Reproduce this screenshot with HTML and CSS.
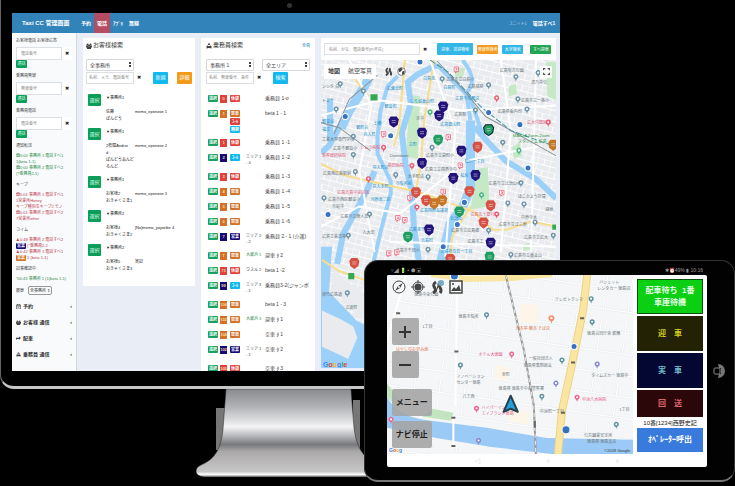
FILE: index.html
```html
<!DOCTYPE html>
<html lang="ja">
<head>
<meta charset="utf-8">
<title>Taxi CC 管理画面</title>
<link rel="stylesheet" href="styles.css">
</head>
<body>
<svg class="defs" aria-hidden="true">
  <symbol id="poi" viewBox="0 0 8 10"><path d="M4 10 3 7A3.4 3.4 0 1 1 5 7Z"/><circle cx="4" cy="3.7" r="1.4" fill="#fff"/></symbol>
  <symbol id="car" viewBox="0 0 12 12"><path d="M3 1 9 1 11 4 10 9 6 12 2 9 1 4Z"/><path d="M4 5H8M4 7H8" stroke="#fff" stroke-width=".8" opacity=".6"/></symbol>
  <symbol id="stop" viewBox="0 0 8 10"><path d="M1 1H7V7H4L3 9V7H1Z" fill="#fff" stroke="#ee5872"/><path d="M3 3H5V5H3" fill="none" stroke="#ee5872"/></symbol>
  <symbol id="taxi" viewBox="0 0 12 12"><path d="M4 1H8V3L10 6 11 7V11H9V10H3V11H1V7L2 6 4 3ZM4 4 3 6H9L8 4Z" fill-rule="evenodd"/></symbol>
  <symbol id="people" viewBox="0 0 12 12"><circle cx="3" cy="3" r="2"/><circle cx="9" cy="3" r="2"/><circle cx="6" cy="5" r="2"/><path d="M0 5H4L5 7H7L8 5H12V9H10V12H2V9H0Z"/></symbol>
  <symbol id="road" viewBox="0 0 14 14"><path d="M3 13C10 9-1 6 6 2M10 13C14 8 6 7 10 2" fill="none" stroke="currentColor" stroke-width="3"/><path d="M6 12 9 3" stroke="currentColor"/></symbol>
</svg>
<main class="scene">
  <section class="monitor">
    <i class="camera"></i>
    <div class="screen">
      <header class="topbar">
        <strong class="brand">Taxi CC 管理画面</strong>
        <nav><a href="#">予約</a><a href="#" class="active">電話</a><a href="#">ｱﾌﾟﾘ</a><a href="#">無線</a></nav>
        <span class="unit">ユニット1</span><span class="phone">電話すべ1</span>
      </header>
      <div class="workspace">
        <aside class="sidebar">
          <form class="dial"><label for="d1">お客様電話 お客様応答</label><div class="group"><input id="d1" placeholder="電話番号"><button type="button" class="clear">✖</button></div><button type="button" class="send">通話</button></form>
          <form class="dial"><label for="d2">乗務員無線</label><div class="group"><input id="d2" placeholder="無線番号"><button type="button" class="clear">✖</button></div><button type="button" class="send">通話</button></form>
          <form class="dial"><label for="d3">乗務員電話</label><div class="group"><input id="d3" placeholder="電話番号"><button type="button" class="clear">✖</button></div><button type="button" class="send">通話</button></form>
          <h3>通知転送</h3>
          <p class="log green">☎0:00 事務所 1 電話すべ1<br>1(beta 1-1)<br>☎0:00 事務所 2 電話すべ2<br>(?乗務員2-1)</p>
          <h3>キープ</h3>
          <p class="log red">☎0:01 事務所 1 電話すべ1<br>1営業所Honey<br>キープ種別をキープ2 モノ<br>☎0:01 事務所 2 電話すべ2<br>7営業所other</p>
          <h3>コイム</h3>
          <p class="log red">♟0:48 事務所 2 電話すべ2<br><b class="tag navy">営業</b> (*乗務員2-2<br>♟0:42 事務所 1 電話すべ1<br><b class="tag orange">営業</b> 1 (beta 1-1)</p>
          <h3>記事確認中</h3>
          <p class="log green">*00:43 事務所 1 (1(beta 1-1)</p>
          <div class="history"><label for="hist">履歴</label><select id="hist"><option>全事務所 ⇕</option></select></div>
          <nav class="menu">
            <a href="#"><svg viewBox="0 0 12 12"><path d="M1 2H11V12H1ZM1 5H11M4 0V4M8 0V4M4 8H8" fill="none" stroke="currentColor" stroke-width="1.5"/></svg>予約<span>‹</span></a>
            <a href="#"><svg viewBox="0 0 12 12"><use href="#people"/></svg>お客様 通信<span>‹</span></a>
            <a href="#"><svg viewBox="0 0 12 12"><path d="M0 9V4H7V1L12 5 7 9V7H3Z"/></svg>配車<span>‹</span></a>
            <a href="#"><svg viewBox="0 0 12 12"><use href="#taxi"/></svg>乗務員 通信<span>‹</span></a>
          </nav>
        </aside>

        <section class="card customers">
          <h2><svg viewBox="0 0 12 12"><use href="#people"/></svg>お客様検索</h2>
          <div class="filters"><select aria-label="事務所"><option>全事務所</option></select></div>
          <div class="filters"><div class="group"><input aria-label="お客様" placeholder="名前、メモ、電話番号"><button type="button" class="clear">✖</button></div><button class="btn cyan">新規</button><button class="btn amber">詳細</button></div>
          <ul class="people">
            <li><button class="pick">選択</button><div><h4>▼事務所1</h4><div class="who"><p>佐藤<br>ぽんどう</p><p>memo_eponzoe 1</p></div></div></li>
            <li><button class="pick">選択</button><div><h4>▼事務所1</h4><div class="who"><p>2夜間Androi<br>d<br>ぽんどうあんど<br>るんど</p><p>memo_eponzoe 2</p></div></div></li>
            <li><button class="pick">選択</button><div><h4>▼事務所1</h4><div class="who"><p>お客様2<br>おきゃくさま1</p><p>memo_eponzoe 3</p></div></div></li>
            <li><button class="pick">選択</button><div><h4>▼事務所2</h4><div class="who"><p>お客様4<br>おきゃくさま2</p><p>[No]memo_yoyoribe 4</p></div></div></li>
            <li><button class="pick">選択</button><div><h4>▼事務所2</h4><div class="who"><p>お客様5<br>おきゃくさま3</p><p>実記</p></div></div></li>
          </ul>
        </section>

        <section class="card crew">
          <h2><svg viewBox="0 0 12 12"><use href="#taxi"/></svg>乗務員検索<a href="#">全員</a></h2>
          <div class="filters pair"><select aria-label="事務所"><option>事務所 1</option></select><select aria-label="エリア"><option>全エリア</option></select></div>
          <div class="filters"><div class="group"><input aria-label="乗務員" placeholder="名前、無線番号、条件"><button type="button" class="clear">✖</button></div><button class="btn cyan">検索</button></div>
          <table>
            <tr><td><button class="tag green">選択</button></td><td><b class="num red">0</b></td><td><b class="tag red">休憩</b></td><td></td><td>乗務員 1-σ</td></tr>
            <tr class="tall"><td><button class="tag green">選択</button></td><td><b class="num orange">1</b></td><td><b class="tag orange">空車</b><b class="tag red">ｺｰﾙ</b><b class="tag cyan">無線</b></td><td></td><td>beta 1 - 1</td></tr>
            <tr><td><button class="tag green">選択</button></td><td><b class="num red">1</b></td><td><b class="tag red">休憩</b></td><td></td><td>乗務員 1 -1</td></tr>
            <tr class="two"><td><button class="tag green">選択</button></td><td><b class="num navy">2</b></td><td><b class="tag cyan">ｺｰﾙ</b></td><td>エリア 1<br>- 4</td><td>乗務員 1 -2</td></tr>
            <tr><td><button class="tag green">選択</button></td><td><b class="num red">3</b></td><td><b class="tag red">休憩</b></td><td></td><td>乗務員 1 -3</td></tr>
            <tr><td><button class="tag green">選択</button></td><td><b class="num orange">4</b></td><td><b class="tag orange">空車</b></td><td></td><td>乗務員 1 -4</td></tr>
            <tr><td><button class="tag green">選択</button></td><td><b class="num orange">5</b></td><td><b class="tag orange">空車</b></td><td></td><td>乗務員 1 -5</td></tr>
            <tr><td><button class="tag green">選択</button></td><td><b class="num orange">6</b></td><td><b class="tag orange">空車</b></td><td></td><td>乗務員 1 -6</td></tr>
            <tr class="two"><td><button class="tag green">選択</button></td><td><b class="num navy">7</b></td><td><b class="tag navy">営業</b></td><td>エリア 2<br>- 2</td><td>乗務員 2 - 1 (介護)</td></tr>
            <tr><td><button class="tag green">選択</button></td><td><b class="num orange">T</b></td><td><b class="tag orange">空車</b></td><td class="place">大蔵浜 5</td><td>迎車 ﾀ 2</td></tr>
            <tr><td><button class="tag green">選択</button></td><td><b class="num red">73</b></td><td><b class="tag red">休憩</b></td><td>ウスル 2</td><td>beta 1 -2</td></tr>
            <tr class="two"><td><button class="tag green">選択</button></td><td><b class="num navy">99</b></td><td><b class="tag cyan">ｺｰﾙ</b></td><td>エリア 3<br>- 1</td><td>乗務員3-2(ジャンボ</td></tr>
            <tr><td><button class="tag green">選択</button></td><td><b class="num orange">104</b></td><td><b class="tag orange">空車</b></td><td></td><td>beta 1 - 3</td></tr>
            <tr><td><button class="tag green">選択</button></td><td><b class="num orange">102</b></td><td><b class="tag orange">空車</b></td><td class="place">大蔵浜 3</td><td>迎車 ﾀ 1</td></tr>
            <tr><td><button class="tag green">選択</button></td><td><b class="num orange">104</b></td><td><b class="tag orange">空車</b></td><td></td><td>空車 ﾀ 1</td></tr>
            <tr class="two"><td><button class="tag green">選択</button></td><td><b class="num navy">102</b></td><td><b class="tag navy">営業</b></td><td>エリア 1<br>- 1</td><td>空車 ﾀ 2</td></tr>
            <tr><td><button class="tag green">選択</button></td><td><b class="num red">105</b></td><td><b class="tag red">休憩</b></td><td></td><td>空車 ﾀ 3</td></tr>
          </table>
        </section>

        <section class="card mapcard">
          <div class="toolbar"><div class="group"><input aria-label="地図検索" placeholder="名前、かな、電話番号(P/不在)"><button type="button" class="clear">✖</button></div><button class="btn sky">迎車、送迎検索</button><button class="mini amber">無線隊検索</button><button class="mini sky">大字検索</button><button class="mini leaf">すべ迎車</button></div>
          <div class="map">
            <svg class="drawing" viewBox="322 60 233 307" preserveAspectRatio="xMinYMin slice">
              <defs>
                <pattern id="blocks" width="13" height="11" patternUnits="userSpaceOnUse" patternTransform="rotate(14)"><path d="M0 0H13M0 6H13M0 0V11M7 0V6" stroke="#fff" fill="none"/></pattern>
              </defs>
              <path class="land" d="M322 60H555V367H322Z"/>
              <path fill="url(#blocks)" d="M322 60H555V367H322Z"/>
              <path class="park" d="M410 95 420 96 418 158 406 156ZM476 168 487 166 489 205 470 208ZM511 146 519 142 521 155 513 158ZM545 62H555V100L546 96ZM522 243 528 241 529 248 522 249ZM454 68 465 68 462 78 455 76ZM508 86 515 84 516 94 508 96Z"/>
              <g class="water">
                <path d="M322 245H333L330 290 345 305 357 318 365 322V367H322V300Z"/>
                <path class="r9" d="M369 79C360 96 348 110 342 128"/><path class="r6" d="M342 123 330 145 322 152M331 98V140"/>
                <path class="r6" d="M375 170 368 188 358 207 344 232 338 262M437 65 418 74 408 82 411 103 402 132 406 165 412 190 414 225 419 260"/>
                <path class="r4" d="M398 76 388 86 381 110 378 135 378 153 391 180 391 192 381 230 374 260"/>
                <path class="r9" d="M470 120V187L462 206 450 222 440 262"/>
                <path class="r4" d="M462 60C472 72 475 84 466 92L470 120M437 65 470 98 483 137"/>
                <path class="r6" d="M474 126 488 142 505 160 535 178 555 197"/>
              </g>
              <path class="land" d="M323 308 342 317 354 324 358 335 349 356 336 350 323 344Z"/>
              <path class="land" d="M334 266 348 280 364 290V316L356 312 345 298 332 288Z"/>
              <g class="highway"><path d="M322 163 345 174 370 180 420 191 450 202 473 210 492 228 506 228 530 220 555 225"/><path d="M323 258 340 269 365 278M405 60 399 130 394 145M434 60 424 120 421 162 415 195M355 78 369 96M470 205 452 235 449 262"/></g>
              <path class="street" d="M322 225 360 205 400 212 465 160 540 145M350 60 372 105 360 170 375 250M500 60 510 130 500 250M430 60 455 130 445 255M322 115 380 100 460 110 555 105M390 240 555 245M535 60 530 250"/>
              <g class="rail"><path d="M437 61 465 92 485 116 514 132 555 155M378 75 350 99 335 133M322 122 340 127 371 150"/><path class="jr" d="M430 60 448 72 480 106 510 130 555 146"/></g>
              <g id="city"></g>
              <path fill="#35a853" d="M371 94H378V100H371ZM551 223H555V228H551ZM349 271H355V277H349Z"/>
              <text class="google" x="324" y="364"><tspan fill="#4285f4">G</tspan><tspan fill="#ea4335">o</tspan><tspan fill="#fbbc05">o</tspan><tspan fill="#4285f4">g</tspan><tspan fill="#34a853">l</tspan><tspan fill="#ea4335">e</tspan></text>
            </svg>
            <div class="mapctl"><div class="types"><button><b>地図</b></button><button>航空写真</button></div><svg viewBox="0 0 14 14"><use href="#road"/></svg><svg viewBox="0 0 14 14"><circle cx="7" cy="7" r="6" fill="#fff" stroke="#444"/><path d="M2 4 6 1 9 3 6 7 3 8ZM8 7 12 6 11 11 8 12Z"/></svg><button class="full" aria-label="全画面"><svg viewBox="0 0 12 12"><path d="M1 4V1H4M8 1H11V4M11 8V11H8M4 11H1V8" fill="none" stroke="#555" stroke-width="2"/></svg></button></div>
          </div>
        </section>
      </div>
    </div>
  </section>
  <svg class="stand" viewBox="196 389 180 90" aria-hidden="true">
    <defs><linearGradient id="metal" x1="0" y1="0" x2="0" y2="1"><stop offset="0" stop-color="#898b8e"/><stop offset=".2" stop-color="#b0b2b5"/><stop offset=".43" stop-color="#f3f3f5"/><stop offset=".54" stop-color="#b2b3b6"/><stop offset=".63" stop-color="#77797d"/><stop offset=".71" stop-color="#aaa8a8"/><stop offset=".94" stop-color="#c8c7c7"/><stop offset=".97" stop-color="#fff"/><stop offset="1" stop-color="#777"/></linearGradient></defs>
    <path fill="#777" d="M216 408H225V450H216ZM353 400H360V450H353Z"/>
    <path fill="url(#metal)" stroke="#222" stroke-width=".5" d="M226 389H351L354 428C356 443 360 453 370 460V477H204C194 476 194 468 201 465C215 459 221 449 223 429Z"/>
  </svg>

  <section class="tablet">
    <div class="status"><span>▿◢ 🔋 ▪ ⬢ ▣</span><span>✱⏰49% ▮ 10:16</span></div>
    <div class="pad">
      <div class="navmap">
        <svg class="drawing" viewBox="386 275 248 178" preserveAspectRatio="xMinYMin slice">
          <defs><pattern id="lanes" width="25" height="21" patternUnits="userSpaceOnUse" patternTransform="rotate(8)"><path d="M0 0H25M0 12H25M0 0V21M13 0V12" stroke="#e5e9ed" stroke-width="2" fill="none"/><path d="M0 0H25M0 12H25M0 0V21M13 0V12" stroke="#fff" fill="none"/></pattern></defs>
          <path fill="#f5f6f7" d="M386 275H634V453H386Z"/><path fill="url(#lanes)" d="M386 275H634V453H386Z"/>
          <path fill="#fdf5e7" d="M519 303 536 305 535 324 517 322ZM494 365 508 367 506 380 493 378ZM508 409 528 411 526 424 507 421Z"/>
          <path fill="#c2e5bf" d="M386 383 402 403 398 409 386 396ZM431 408 452 412 450 420 421 416Z"/>
          <path fill="#9bcaf6" d="M386 396C395 413 410 417 430 420L485 427 545 437 634 439V453H550L490 446 435 437 386 427Z"/>
          <path class="avenue-edge" d="M585 275 581 310 571 359 560 410 556 453"/><path class="avenue" d="M585 275 581 310 571 359 560 410 556 453"/>
          <path class="avenue" d="M430 274 465 279 510 278 550 274"/>
          <path class="track-bg" d="M504 275 522 349 532 405 534 453"/><path class="track" d="M504 275 522 349 532 405 534 453"/>
          <path stroke="#fff" stroke-width="2" fill="none" d="M452 416V445M405 275 386 340M456 275 454 405"/>
          <path stroke="#65645b" stroke-width="2" d="M395 313H399M453 351H457M450 417H454M450 445H454M578 318H582M569 362H573M559 412H563M533 420V427"/>
          <g id="town"></g>
          <path fill="#23a0dc" stroke="#29414f" stroke-width="2" stroke-linejoin="round" d="M509 395 516 411 509 408 502 411Z"/>
          <text class="google small" x="388" y="451"><tspan fill="#4285f4">G</tspan><tspan fill="#ea4335">o</tspan><tspan fill="#fbbc05">o</tspan><tspan fill="#4285f4">g</tspan></text>
        </svg>
        <div class="overlay">
          <div class="tools">
            <svg viewBox="0 0 14 14"><circle cx="7" cy="7" r="6" fill="none" stroke="#444"/><path d="M11 3 8 8 3 11 6 6Z"/><circle cx="7" cy="7" r="1" fill="#fff"/></svg>
            <svg viewBox="0 0 14 14"><circle cx="7" cy="7" r="5" fill="none" stroke="#444"/><circle cx="7" cy="7" r="3.6"/><path d="M7 0V3M7 11V14M0 7H3M11 7H14" stroke="#444"/></svg>
            <svg viewBox="0 0 14 14"><use href="#road"/><circle cx="11" cy="3" r="3" fill="#78a9c4"/></svg>
            <svg viewBox="0 0 14 14"><path d="M1 1H13V13H1Z" fill="none" stroke="#444" stroke-width="1.5"/><path d="M2 11 5 7 7 9 10 5 12 11Z"/><circle cx="4" cy="4" r="1"/></svg>
          </div>
          <button class="zoom" aria-label="拡大"><svg viewBox="0 0 12 12"><path d="M0 6H12M6 0V12" stroke="#333" stroke-width="2"/></svg></button><button class="zoom second" aria-label="縮小"><svg viewBox="0 0 12 12"><path d="M0 6H12" stroke="#333" stroke-width="2"/></svg></button>
          <button class="wide">メニュー</button><button class="wide">ナビ停止</button>
        </div>
      </div>
      <div class="state">
        <button class="wait">配車待ち&nbsp; 1番<br>車庫待機</button>
        <button class="pickup">迎　車</button>
        <button class="hired">実　車</button>
        <button class="return">回　送</button>
        <p>10番[1234]西野史記</p>
        <button class="call">ｵﾍﾟﾚｰﾀｰ呼出</button>
      </div>
      <div class="android"><span>◁</span><span>○</span><span>○</span></div>
    </div>
    <svg class="home" viewBox="0 0 14 16"><path d="M5 1A7 7 0 0 1 5 15L6 11H8V5H6Z" fill="#777"/><rect x="1" y="5" width="6" height="6" rx="1" fill="#000" stroke="#888"/></svg>
  </section>
</main>
<script src="map.js"></script>
</body>
</html>
```
FILE: map.js
```js
const text = (cls, rows) => `<g class="${cls}">` + rows.map(([x, y, t]) => `<text x="${x}" y="${y}">${t}</text>`).join('') + '</g>';
const pins = (id, fill, w, h, rows) => `<g fill="${fill}">` + rows.map(([x, y]) => `<use href="#${id}" x="${x}" y="${y}" width="${w}" height="${h}"/>`).join('') + '</g>';
const shields = rows => '<g class="shield">' + rows.map(([x, y, r = 3]) => `<circle cx="${x}" cy="${y}" r="${r}"/>`).join('') + '</g>';

document.getElementById('city').innerHTML =
  text('name', [[323,88,'ンシタ  白'],[323,140,'工業大学専門学校'],[334,149,'広島市観音小'],[324,174,'広島西広島駅前'],[329,200,'広島市西区観音小'],[333,207,'市庭中'],[341,216,'広島市立商人高'],[323,236,'広島工業高等'],[323,294,'南竹広島道'],[346,307,'江波町'],[499,72,'広島有方公園'],[446,81,'広島市立白島小'],[467,88,'広島城跡'],[530,84,'済乃井公'],[520,102,'広島市立一条小'],[497,112,'広島県看内司'],[454,115,'広島駅'],[416,119,'本中'],[390,156,'Downtown'],[426,156,'広島市立袋町小'],[425,170,'広島工立国泰寺中'],[408,177,'大手町店'],[488,184,'広島市立比治山小'],[517,197,'ほこかよう計算'],[520,217,'中原寺大'],[498,224,'広島市立江三原'],[451,230,'広島市立広島郷'],[467,241,'広島市工'],[523,237,'広島市立広大'],[396,250,'広島市千田小'],[513,255,'広島市立黄金山'],[544,210,'緑地'],[323,102,'ドミー'],[363,232,'入大田']]) +
  text('blue', [[323,122,'観音台'],[323,130,'福江'],[357,128,'観町台'],[364,135,'舟入町'],[387,90,'広瀬北町'],[385,108,'観音町'],[423,80,'白島北'],[443,89,'白島町'],[455,100,'広島市の門店'],[410,103,'しろ城東山町'],[409,145,'立町'],[440,125,'広島銀山町'],[464,162,'松川一丁目'],[373,168,'舟入町店'],[373,187,'舟入本町'],[371,200,'河原南二区'],[420,211,'広島国際会議場'],[450,218,'比治山'],[409,229,'広島本千田'],[421,240,'吉島町'],[440,251,'吉島花の丘一丁目'],[396,184,'市役所前'],[460,176,'松京'],[374,124,'土橋']]) +
  text('pink', [[338,193,'広島吉島中央区民'],[323,156,'島県総研病院'],[361,148,'シムラ病院'],[388,166,'島田病院'],[526,123,'広大付属病院'],[470,214,'広島五十銀行']]) +
  text('stadium', [[512,136,'MAZDA Zoom-Zoom'],[517,142,'スタジアム 広島']]) +
  pins('poi', '#6d94a5', 6, 9, [[338,80],[361,87],[334,105],[351,132],[351,150],[353,167],[322,193],[367,209],[346,230],[345,287],[439,75],[485,81],[512,73],[534,69],[514,95],[523,105],[472,106],[429,143],[393,170],[425,172],[517,178],[504,198],[520,199],[531,217],[485,225],[549,230],[425,244],[507,249],[499,138]]) +
  pins('poi', '#ee5872', 6, 9, [[366,174],[493,94],[544,118],[381,143],[409,161],[414,202],[493,209]]) +
  pins('poi', '#42b883', 6, 9, [[515,146],[478,190],[427,108]]) +
  pins('stop', 'none', 6, 8, [[453,66],[381,130],[445,133],[457,161],[440,187],[407,193],[498,188],[395,213],[402,215],[386,248],[394,247]]) +
  shields([[420,62],[488,112],[346,116],[391,135],[519,124],[527,167],[464,201],[329,213],[457,223],[443,245]]) +
  pins('car', '#22127a', 12, 12, [[437,100],[433,109],[388,115],[416,126],[416,156],[455,144],[469,168],[447,171],[423,222],[484,235]]) +
  pins('car', '#d65043', 12, 12, [[471,140],[410,185],[420,193],[463,184],[484,198],[477,215],[444,251],[349,255]]) +
  pins('car', '#c57626', 12, 12, [[428,196],[436,193],[546,138]]) +
  pins('car', '#209d61', 12, 12, [[432,133],[453,204],[402,229],[483,249]]) +
  '<use href="#car" x="482" y="123" width="12" height="12" fill="#209d61" stroke="#123"/>';

document.getElementById('town').innerHTML =
  text('town', [[597,284,'バジェット'],[595,290,'レンタカー 徳島店'],[553,301,'テレビトクシマ'],[585,335,'徳島合同庁舎 新館'],[413,296,'徳島中央公園'],[457,318,'徳島市役所'],[421,328,'1丁目'],[527,360,'一般社団法人'],[522,366,'徳島県薬剤師会'],[589,376,'タイムズカー 徳島中'],[455,377,'イノベーション'],[455,383,'センター徳島'],[497,389,'徳島県 徳島市中央警察署'],[461,397,'八丁西'],[500,375,'幸町'],[538,412,'中洲町一丁目'],[582,436,'公共職業安定所'],[585,442,'徳島県 徳島支店'],[617,410,'1丁目']]) +
  text('town tan', [[395,351,'はやしのお好み焼'],[514,330,'日本亭 橋本 そば店']]) +
  text('town rose', [[477,356,'ホテル大徳園'],[480,408,'ハイパーイン'],[480,414,'エイブランド徳島'],[580,400,'中洲八木病院']]) +
  text('town credit', [[602,451,'©2019 Google']]) +
  pins('poi', '#5c919d', 6, 9, [[586,295],[587,318],[482,311],[456,361],[557,356],[537,392],[611,420]]) +
  pins('poi', '#8486cf', 6, 9, [[592,360],[551,379],[474,436]]) +
  pins('poi', '#ef638e', 6, 9, [[507,350],[472,404],[387,415],[572,393]]) +
  pins('poi', '#f18b62', 7, 10, [[546,314]]) +
  shields([[453,276,4],[572,346],[564,429,4]]);
```
FILE: styles.css
```css
* { box-sizing: border-box; }
body { margin: 0; background: #000; color: #444; font: 5px/7px "Liberation Sans", "Noto Sans CJK JP", sans-serif; }
h2, h3, h4, p, ul { margin: 0; padding: 0; font-weight: normal; font-size: inherit; }
ul { list-style: none; }
a { color: inherit; text-decoration: none; }
button, input, select { font: inherit; color: inherit; margin: 0; padding: 0; border: 0; border-radius: 1px; background: none; min-width: 0; }
button { white-space: nowrap; text-align: center; }
svg { fill: #444; color: #444; }
.defs { position: absolute; width: 0; height: 0; }
.scene { position: relative; min-height: 100vh; overflow: hidden; }

.monitor { position: relative; width: 78%; height: 80vh; padding: 13px 13px 15px 11px; border-left: 1px solid #666; border-bottom: 3px solid #c4c6c8; border-bottom-left-radius: 14px; background: #000; }
.camera { position: absolute; top: 3px; left: 50%; width: 5px; height: 5px; border-radius: 50%; background: #333; }
.screen { display: flex; flex-direction: column; height: 100%; overflow: hidden; background: #e9edf5; }
.topbar { display: flex; align-items: center; flex: none; height: 20px; padding: 0 5px 0 10px; background: #3383bb; color: #fff; }
.brand { width: 56px; font-size: 6px; white-space: nowrap; }
.topbar nav { display: flex; flex: 1; align-self: stretch; font-weight: bold; }
.topbar nav a { width: 16px; line-height: 20px; text-align: center; }
.topbar nav .active { background: #b64c62; }
.phone { margin-left: 6px; font-weight: bold; }
.unit { color: #c5dff0; font-size: 4px; }
.workspace { display: grid; grid-template-columns: 65px 112px 114px 1fr; column-gap: 6px; flex: 1; min-height: 0; padding-right: 4px; }

.sidebar { padding: 4px 4px 0; background: #f8fafc; border-right: 1px solid #d4d9e0; white-space: nowrap; overflow: hidden; }
.dial { margin-bottom: 4px; }
.dial label, .sidebar h3 { display: block; height: 8px; font-size: 4px; line-height: 8px; }
.group { display: flex; }
.group input { flex: 1; width: 0; padding: 0 4px; border: 1px solid #dcdfe3; background: #fff; border-radius: 0; }
.group input::placeholder { color: #888; opacity: 1; }
.dial .group input { font-size: 4px; }
.clear { width: 10px; background: #fff; color: #222; }
.dial .group { height: 13px; margin-top: 2px; }
.send { display: block; width: 11px; height: 8px; background: #0b9e59; color: #d9ffea; font-size: 4px; line-height: 8px; }
.sidebar h3 { margin-bottom: 3px; }
.log { margin-bottom: 4px; font-size: 4px; line-height: 6px; }
.log.green { color: #328e4d; }
.log.red { color: #c03e50; }
.history { display: flex; gap: 4px; height: 10px; font-size: 4px; line-height: 10px; margin-bottom: 2px; }
.history select { width: 24px; height: 9px; padding: 0 1px; border: 1px solid #999; border-radius: 2px; appearance: none; font-size: 4px; line-height: 7px; }
.menu a { display: flex; align-items: center; gap: 2px; height: 16px; font-weight: bold; color: #333; }
.menu svg { width: 5px; height: 5px; }
.menu span { margin-left: auto; }

.tag { display: block; width: 10px; height: 7px; border-radius: 1px; color: #fff; font: bold 4px/7px "Liberation Sans", "Noto Sans CJK JP", sans-serif; text-align: center; overflow: hidden; }
.log .tag { display: inline-block; height: 6px; line-height: 6px; vertical-align: top; }
.tag.green { background: #16a160; }
.red.tag, .red.num { background: #df413d; }
.orange.tag, .orange.num { background: #d27127; }
.navy.tag, .navy.num { background: #120b78; }
.cyan { background: #11b9ef; }
.amber { background: #f39a1b; }
.sky { background: #31b6e6; }
.leaf { background: #22a550; }

.card { margin-top: 5px; background: #fff; border-radius: 1px; min-width: 0; }
.customers { align-self: start; padding: 3px 3px 14px; }
.card h2 { display: flex; align-items: center; gap: 1px; height: 9px; margin-bottom: 8px; font-size: 6px; color: #333; }
.card h2 svg { width: 6px; height: 6px; }
.card h2 a { margin-left: auto; font-size: 4px; color: #2a88bb; }
.filters { display: flex; align-items: center; height: 13px; }
.filters select { width: 48px; height: 12px; padding: 0 3px; border: 1px solid #d5d8dc; appearance: none; line-height: 10px; background: linear-gradient(#444 40%, #fff 40% 60%, #444 60%) right 2px center / 2px 5px no-repeat #fff; }
.filters .group { width: 58px; height: 12px; margin-right: 9px; }
.filters .group input { padding: 0 2px; font-size: 4px; }
.btn { width: 15px; height: 12px; color: #fff; }
.btn + .btn { margin-left: 9px; }
.people { padding: 10px 2px 0; }
.people li { display: flex; gap: 5px; margin-bottom: 6px; }
.people li:last-child { margin: 0; }
.pick { flex: none; width: 13px; height: 12px; background: #0b9e59; color: #d9ffea; }
.people h4 { height: 8px; margin-bottom: 6px; font-size: 4px; color: #222; }
.who { display: grid; grid-template-columns: 29px 1fr; font-size: 4px; color: #222; white-space: nowrap; }

.crew { padding: 3px 5px 0; overflow: hidden; }
.pair { justify-content: space-between; }
.crew table { margin: 8px 0 0 2px; border-spacing: 0; white-space: nowrap; }
.crew tr { height: 15px; }
.crew .two { height: 19px; }
.crew .tall { height: 29px; }
.crew td { padding: 3px 2px 0 0; vertical-align: top; font-size: 5px; line-height: 7px; }
.crew td:nth-child(4) { width: 23px; min-width: 23px; padding-left: 4px; font-size: 4px; line-height: 6px; }
.crew td .tag + .tag { margin-top: 1px; }
.num { display: block; width: 7px; height: 8px; margin-right: 1px; color: #ffd9a0; font-size: 4px; line-height: 8px; text-align: center; }
.crew .place { color: #328e4d; }

.mapcard { display: flex; flex-direction: column; margin-bottom: 3px; overflow: hidden; }
.toolbar { display: flex; align-items: center; gap: 4px; flex: none; height: 22px; padding: 0 5px 0 3px; }
.toolbar .group { flex: 1; height: 12px; }
.toolbar .group input { font-size: 4px; }
.toolbar .btn { width: 36px; margin-left: 3px; font-size: 4px; }
.mini { width: 21px; height: 9px; color: #fff; font-size: 4px; line-height: 9px; }
.mini.leaf { margin-left: 3px; }
.map, .navmap { position: relative; flex: 1; min-height: 0; overflow: hidden; }
.drawing { position: absolute; inset: 0; width: 100%; height: 100%; }
.mapctl { position: absolute; top: 4px; left: 3px; right: 4px; display: flex; align-items: center; gap: 4px; }
.mapctl > svg { width: 9px; height: 9px; }
.types { display: flex; padding: 0 4px; margin-right: 4px; background: #fff; font-size: 6px; line-height: 15px; }
.types button + button { margin-left: 8px; }
.full { width: 12px; height: 12px; margin-left: auto; background: #fff; line-height: 0; }
.full svg { width: 7px; height: 7px; }

.land { fill: #e9ebee; }
.park { fill: #c5e8c5; }
.water { fill: #9bd0f9; }
.water path[class] { fill: none; stroke: #9bd0f9; }
.r9 { stroke-width: 9; } .r6 { stroke-width: 6; } .r4 { stroke-width: 4; }
.highway { fill: none; stroke: #f8dd8d; stroke-width: 2; }
.street { fill: none; stroke: #fff; stroke-width: 2; }
.rail { fill: none; stroke: #8d969b; stroke-width: 1; }
.rail .jr { stroke: #3c969d; stroke-dasharray: 6 2; }
.name, .blue, .pink, .stadium { font-size: 4px; }
.name { fill: #64737a; }
.blue { fill: #148fc9; }
.pink { fill: #dc6178; }
.stadium { fill: #32994d; }
.shield { fill: #3672c2; stroke: #fff; stroke-width: 1; }
.google { font-size: 7px; font-weight: bold; }
.google.small { font-size: 5px; }

.stand { display: block; width: 180px; margin-left: 26.6%; }

.tablet { position: absolute; right: 0; bottom: 4px; width: 50.5%; height: 222px; padding: 5px 27px 15px 22px; border: 1px solid #333; border-bottom: 2px solid #777; border-radius: 14px; background: #020203; }
.status { display: flex; justify-content: space-between; height: 9px; padding: 0 4px; color: #999; line-height: 9px; }
.pad { display: grid; grid-template: 1fr 14px / 1fr 74px; height: 192px; overflow: hidden; border-radius: 2px; background: #fff; }
.home { position: absolute; right: 7px; top: 102px; width: 14px; height: 16px; }
.overlay { position: absolute; inset: 5px auto auto 5px; display: flex; flex-direction: column; align-items: flex-start; gap: 5px; }
.tools { display: flex; gap: 5px; margin-bottom: 19px; }
.tools svg { width: 14px; height: 14px; }
.zoom, .wide { width: 27px; height: 27px; border-radius: 2px; background: rgb(165 165 165 / 90%); line-height: 0; }
.second { margin: 1px 0 6px; }
.zoom svg { width: 12px; height: 12px; }
.wide { width: 40px; font-size: 8px; font-weight: bold; color: #222; }
.avenue, .avenue-edge { fill: none; stroke: #fbe6a1; stroke-width: 6; }
.avenue-edge { stroke: #ecd38a; stroke-width: 8; }
.track-bg, .track { fill: none; stroke: #999; stroke-width: 2; }
.track { stroke: #eee; stroke-width: 1; stroke-dasharray: 4 3; }
.town { fill: #6b767c; font-size: 4px; }
.tan { fill: #e07751; } .rose { fill: #e45987; } .credit { fill: #333; }
.state { display: flex; flex-direction: column; gap: 2px; padding: 4px 4px 2px; font-weight: bold; }
.state button { height: 35px; border-radius: 0; font-size: 8px; line-height: 12px; }
.state .wait { background: #0bcf13; border: 1px solid #07510a; color: #e8ffe8; }
.state .pickup { background: #242205; color: #d8cf1c; }
.state .hired { background: #040731; color: #77bccd; }
.state .return { height: 27px; background: #2c070a; color: #dd6469; }
.state p { height: 7px; font-size: 6px; line-height: 9px; color: #222; text-align: center; white-space: nowrap; }
.state .call { height: 24px; background: #397bdc; color: #fff; }
.android { grid-column: 1 / -1; display: flex; justify-content: space-around; padding: 0 55px; color: #aaa; font-size: 6px; line-height: 14px; }
```
